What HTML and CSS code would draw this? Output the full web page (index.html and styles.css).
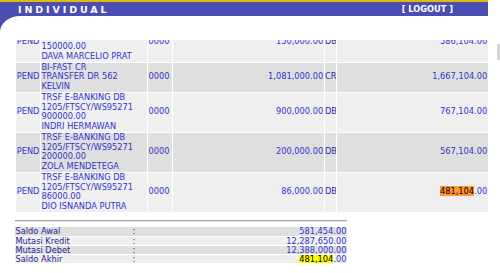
FILE: index.html
```html
<!DOCTYPE html>
<html>
<head>
<meta charset="utf-8">
<title>Individual</title>
<link rel="stylesheet" href="styles.css">
</head>
<body>
<div class="page">
  <div class="main">
    <header class="top">
      <div class="bar">
        <span class="title">INDIVIDUAL</span>
        <span class="logout">[ LOGOUT ]</span>
      </div>
      <div class="corner"></div>
    </header>
    <div class="viewport">
      <div class="scroller">
        <table class="trx">
          <colgroup>
            <col class="c-st"><col class="c-desc"><col class="c-br"><col class="c-amt"><col class="c-dc"><col class="c-bal">
          </colgroup>
          <tr class="light">
            <td class="mid">PEND</td>
            <td>TRSF E-BANKING DB<br>1205/FTSCY/WS95271<br>150000.00<br>DAVA MARCELIO PRAT</td>
            <td class="mid">0000</td>
            <td class="mid num">150,000.00</td>
            <td class="mid dc">DB</td>
            <td class="mid num">586,104.00</td>
          </tr>
          <tr class="dark">
            <td class="mid">PEND</td>
            <td>BI-FAST CR<br>TRANSFER DR 562<br>KELVIN</td>
            <td class="mid">0000</td>
            <td class="mid num">1,081,000.00</td>
            <td class="mid dc">CR</td>
            <td class="mid num">1,667,104.00</td>
          </tr>
          <tr class="light">
            <td class="mid">PEND</td>
            <td>TRSF E-BANKING DB<br>1205/FTSCY/WS95271<br>900000.00<br>INDRI HERMAWAN</td>
            <td class="mid">0000</td>
            <td class="mid num">900,000.00</td>
            <td class="mid dc">DB</td>
            <td class="mid num">767,104.00</td>
          </tr>
          <tr class="dark">
            <td class="mid">PEND</td>
            <td>TRSF E-BANKING DB<br>1205/FTSCY/WS95271<br>200000.00<br>ZOLA MENDETEGA</td>
            <td class="mid">0000</td>
            <td class="mid num">200,000.00</td>
            <td class="mid dc">DB</td>
            <td class="mid num">567,104.00</td>
          </tr>
          <tr class="light">
            <td class="mid">PEND</td>
            <td>TRSF E-BANKING DB<br>1205/FTSCY/WS95271<br>86000.00<br>DIO ISNANDA PUTRA</td>
            <td class="mid">0000</td>
            <td class="mid num">86,000.00</td>
            <td class="mid dc">DB</td>
            <td class="mid num"><mark class="hit-active">481,104</mark>.00</td>
          </tr>
        </table>
        <hr class="rule">
        <table class="sum">
          <colgroup><col class="s-lbl"><col class="s-col"><col class="s-val"></colgroup>
          <tr class="dark"><td class="lbl">Saldo Awal</td><td class="colon">:</td><td class="num">581,454.00</td></tr>
          <tr class="light"><td class="lbl">Mutasi Kredit</td><td class="colon">:</td><td class="num">12,287,650.00</td></tr>
          <tr class="dark"><td class="lbl">Mutasi Debet</td><td class="colon">:</td><td class="num">12,388,000.00</td></tr>
          <tr class="light"><td class="lbl">Saldo Akhir</td><td class="colon">:</td><td class="num"><mark class="hit">481,104</mark>.00</td></tr>
        </table>
      </div>
    </div>
  </div>
  <div class="rail"><div class="thumb"></div></div>
</div>
</body>
</html>
```
FILE: styles.css
```css
html, body {
  margin: 0;
  padding: 0;
  background: #ffffff;
}
body {
  font-family: "DejaVu Sans", Verdana, sans-serif;
  font-size: 8.25px;
  color: #3333cc;
}
.page {
  display: flex;
  width: 500px;
  height: 273px;
  overflow: hidden;
}
.main {
  width: 488px;
  flex: none;
  display: flex;
  flex-direction: column;
}
.rail {
  flex: 1;
  display: flex;
  flex-direction: column;
  align-items: flex-end;
}
.thumb {
  margin-top: 44px;
  width: 3px;
  height: 16px;
  background: #d4d4d4;
}
.top {
  background: #4a4eb2;
  border-top: 2px solid #e3b90b;
  flex: none;
}
.bar {
  height: 14px;
  display: flex;
  align-items: center;
  justify-content: space-between;
  padding: 0 35px 0 18px;
  color: #ffffff;
  font-weight: bold;
}
.title {
  font-size: 9.5px;
  letter-spacing: 2.9px;
}
.logout {
  font-size: 8.25px;
}
.corner {
  height: 24px;
  background: #ffffff;
  border-top-left-radius: 20px 16px;
}
.viewport {
  flex: 1;
  overflow: hidden;
}
.scroller {
  margin-top: -18.4px;
  padding-left: 15px;
}
table {
  border-collapse: separate;
  table-layout: fixed;
}
.trx {
  width: 474px;
  border-spacing: 1.5px 1.2px;
  line-height: 9.75px;
}
.c-st { width: 23.5px; }
.c-desc { width: 105.5px; }
.c-br { width: 24.5px; }
.c-amt { width: 149.5px; }
.c-dc { width: 11.5px; }
.c-bal { width: 149.5px; }
td {
  padding: 0 0.75px;
  vertical-align: top;
  white-space: nowrap;
  overflow: hidden;
}
td.mid { vertical-align: middle; }
td.num { text-align: right; }
td.dc { color: #2b2b9c; padding: 0; }
tr.light td { background: #efefef; }
tr.dark td { background: #dfdfdf; }
mark {
  color: #000000;
  padding: 0;
}
mark.hit { background: #ffff00; }
mark.hit-active { background: #ff9632; }
.rule {
  width: 332px;
  margin: 7px 0 0 0;
  border: 0;
  border-top: 1px solid #a3a3a3;
  border-bottom: 1px solid #e6e6e6;
  height: 0;
}
.sum {
  width: 332px;
  margin-top: 4.5px;
  border-spacing: 0 1.5px;
  line-height: 8.25px;
}
.s-lbl { width: 117px; }
.s-col { width: 40px; }
.s-val { width: 175px; }
.sum td { padding: 0 0.5px; }
td.lbl { color: #24248f; }
td.colon { color: #24248f; }
```
